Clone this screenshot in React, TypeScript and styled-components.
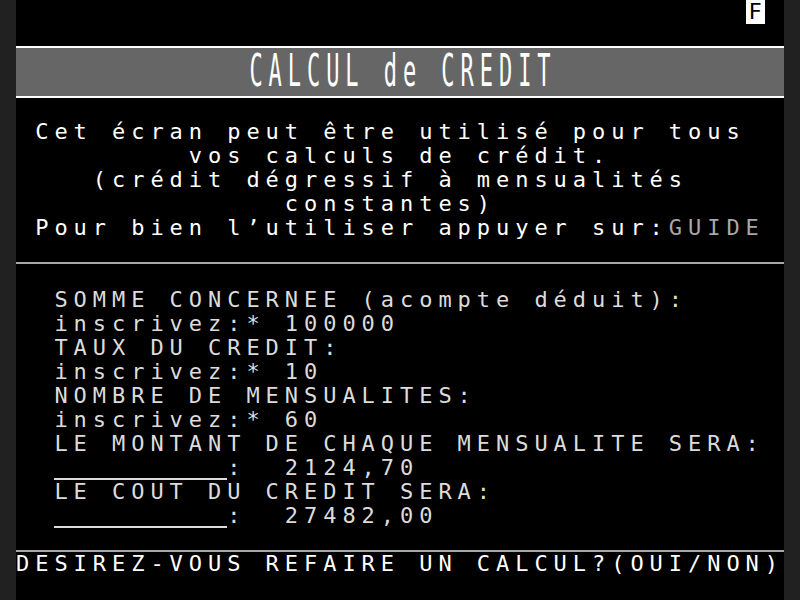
import React from "react";
import styled, { createGlobalStyle } from "styled-components";

const CELL = 19.2;

const Global = createGlobalStyle`
  html, body { margin: 0; padding: 0; background: #212121; }
  body { width: 800px; height: 600px; overflow: hidden; }
`;

const Screen = styled.div`
  width: 768px;
  height: 600px;
  margin: 0 auto;
  background: #000;
  display: flex;
  flex-direction: column;
  font-family: "DejaVu Sans Mono", "Liberation Mono", monospace;
  font-size: 22px;
  letter-spacing: calc(${CELL}px - 1ch);
  color: #fff;
`;

const Line = styled.div<{
  $col?: number;
  $color?: string;
  $top?: string;
  $bottom?: string;
}>`
  height: 24px;
  box-sizing: border-box;
  line-height: 24px;
  white-space: pre;
  padding-left: ${(p) => (p.$col ?? 0) * CELL}px;
  color: ${(p) => p.$color ?? "inherit"};
  border-top: ${(p) => (p.$top ? `2px solid ${p.$top}` : "none")};
  border-bottom: ${(p) => (p.$bottom ? `2px solid ${p.$bottom}` : "none")};
`;

const StatusLine = styled.div`
  height: 24px;
  display: flex;
  justify-content: flex-end;
  padding-right: ${CELL}px;
`;

const FunctionBadge = styled.span`
  width: ${CELL}px;
  height: 24px;
  line-height: 24px;
  background: #fff;
  color: #000;
  letter-spacing: 0;
  text-align: center;
`;

const TitleBand = styled.div`
  height: 48px;
  background: #666;
  display: flex;
  align-items: center;
  justify-content: center;
`;

const TitleText = styled.span`
  display: inline-block;
  height: 24px;
  line-height: 24px;
  white-space: pre;
  transform: scaleY(2);
  margin-right: calc(1ch - ${CELL}px);
`;

const Section = styled.div<{ $color: string }>`
  display: flex;
  flex-direction: column;
  color: ${(p) => p.$color};
`;

const Key = styled.span`
  color: #a8a8a8;
`;

const Blank = styled.span<{ $cells: number }>`
  display: inline-block;
  vertical-align: top;
  box-sizing: border-box;
  width: ${(p) => p.$cells * CELL}px;
  height: 24px;
  border-bottom: 2px solid currentColor;
`;

const fields = [
  { label: "SOMME CONCERNEE (acompte déduit):", value: "100000" },
  { label: "TAUX DU CREDIT:", value: "10" },
  { label: "NOMBRE DE MENSUALITES:", value: "60" },
];

const results = [
  { label: "LE MONTANT DE CHAQUE MENSUALITE SERA:", value: "2124,70" },
  { label: "LE COUT DU CREDIT SERA:", value: "27482,00" },
];

export default function App() {
  return (
    <>
      <Global />
      <Screen>
        <StatusLine>
          <FunctionBadge>F</FunctionBadge>
        </StatusLine>
        <Line $bottom="#fff" />
        <TitleBand>
          <TitleText>CALCUL de CREDIT</TitleText>
        </TitleBand>
        <Line $top="#fff" />
        <Line $col={1}>Cet écran peut être utilisé pour tous</Line>
        <Line $col={9}>vos calculs de crédit.</Line>
        <Line $col={4}>(crédit dégressif à mensualités</Line>
        <Line $col={14}>constantes)</Line>
        <Line $col={1}>
          Pour bien l’utiliser appuyer sur:<Key>GUIDE</Key>
        </Line>
        <Line $bottom="#a8a8a8" />
        <Line />
        <Section $color="#dcdcdc">
          {fields.map((f) => (
            <React.Fragment key={f.label}>
              <Line $col={2}>{f.label}</Line>
              <Line $col={2}>{`inscrivez:* ${f.value}`}</Line>
            </React.Fragment>
          ))}
          {results.map((r) => (
            <React.Fragment key={r.label}>
              <Line $col={2}>{r.label}</Line>
              <Line $col={2}>
                <Blank $cells={9} />
                {`:  ${r.value}`}
              </Line>
            </React.Fragment>
          ))}
        </Section>
        <Line $bottom="#a8a8a8" />
        <Line>DESIREZ-VOUS REFAIRE UN CALCUL?(OUI/NON)</Line>
        <Line />
      </Screen>
    </>
  );
}
